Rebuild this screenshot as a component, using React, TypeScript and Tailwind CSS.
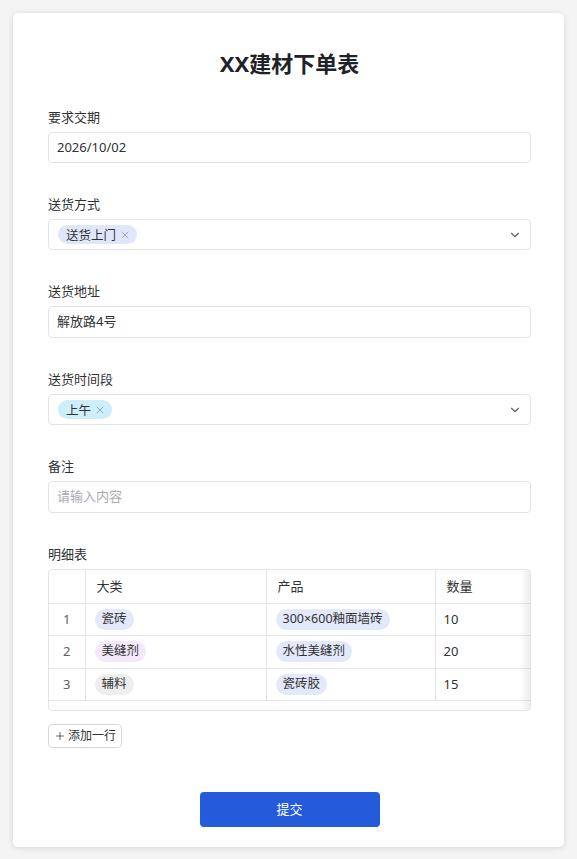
import { ChevronDown, X, Plus } from 'lucide-react';

const font = { fontFamily: '"Noto Sans", "Noto Sans CJK SC", sans-serif' };

const rows = [
    { no: 1, cat: '瓷砖', catCls: 'bg-[#e3e9fb]', prod: '300×600釉面墙砖', qty: '10' },
    { no: 2, cat: '美缝剂', catCls: 'bg-[#f3e9fb]', prod: '水性美缝剂', qty: '20' },
    { no: 3, cat: '辅料', catCls: 'bg-[#eeeeef]', prod: '瓷砖胶', qty: '15' },
];

function Label({ children }: { children: React.ReactNode }) {
    return <div className="text-[13px] leading-[20px] text-[#303133] mb-[5px]">{children}</div>;
}

function Tag({ text, cls }: { text: string; cls: string }) {
    return (
        <span className={`inline-flex items-center h-[19px] rounded-full pl-2 pr-1.5 gap-[3px] text-[12.5px] leading-[19px] text-[#303133] ${cls}`}>
            <span className="pt-[1px]">{text}</span>
            <X size={12} strokeWidth={1.5} className="text-[#8a8f99]" />
        </span>
    );
}

export default function App() {
    return (
        <div className="min-h-screen bg-[#f4f4f5] p-[13px]" style={font}>
            <div className="bg-white rounded-[5px] shadow-[0_1px_6px_rgba(0,0,0,0.12)] pl-[35px] pr-[33px] pt-[35px] pb-[20px]">
                <h1 className="text-center text-[22px] leading-[30px] font-bold text-[#1f2329] mb-[29px]">XX建材下单表</h1>

                {/* 要求交期 */}
                <div className="mb-[31px]">
                    <Label>要求交期</Label>
                    <div className="h-[31px] border border-[#e2e4e8] rounded-[4px] flex items-center px-2 text-[13px] text-[#303133]">
                        2026/10/02
                    </div>
                </div>

                {/* 送货方式 */}
                <div className="mb-[31px]">
                    <Label>送货方式</Label>
                    <div className="h-[31px] border border-[#e2e4e8] rounded-[4px] flex items-center pl-[9px] pr-2">
                        <Tag text="送货上门" cls="bg-[#e1e7fa]" />
                        <ChevronDown size={14} strokeWidth={2} className="ml-auto text-[#606266]" />
                    </div>
                </div>

                {/* 送货地址 */}
                <div className="mb-[31px]">
                    <Label>送货地址</Label>
                    <div className="h-[32px] border border-[#e2e4e8] rounded-[4px] flex items-center px-2 text-[13px] text-[#303133]">
                        解放路4号
                    </div>
                </div>

                {/* 送货时间段 */}
                <div className="mb-[31px]">
                    <Label>送货时间段</Label>
                    <div className="h-[31px] border border-[#e2e4e8] rounded-[4px] flex items-center pl-[9px] pr-2">
                        <Tag text="上午" cls="bg-[#cdeefb]" />
                        <ChevronDown size={14} strokeWidth={2} className="ml-auto text-[#606266]" />
                    </div>
                </div>

                {/* 备注 */}
                <div className="mb-[31px]">
                    <Label>备注</Label>
                    <div className="h-[32px] border border-[#e2e4e8] rounded-[4px] flex items-center px-2 text-[13px] text-[#a8abb2]">
                        请输入内容
                    </div>
                </div>

                {/* 明细表 */}
                <Label>明细表</Label>
                <div className="relative border border-[#e2e4e8] rounded-[4px] overflow-hidden">
                    <table className="border-collapse text-[13px] text-[#303133] w-[560px] table-fixed">
                        <colgroup>
                            <col className="w-[36px]" />
                            <col className="w-[181px]" />
                            <col className="w-[169px]" />
                            <col className="w-[174px]" />
                        </colgroup>
                        <thead>
                            <tr className="h-[33px]">
                                <th className="border-r border-b border-[#e2e4e8] font-normal"></th>
                                <th className="border-r border-b border-[#e2e4e8] font-normal text-left px-[11px]">大类</th>
                                <th className="border-r border-b border-[#e2e4e8] font-normal text-left px-[11px]">产品</th>
                                <th className="border-b border-[#e2e4e8] font-normal text-left px-[11px]">数量</th>
                            </tr>
                        </thead>
                        <tbody>
                            {rows.map((r) => (
                                <tr key={r.no} className="h-[32.5px]">
                                    <td className="border-r border-b border-[#e2e4e8] text-center text-[#606266]">{r.no}</td>
                                    <td className="border-r border-b border-[#e2e4e8] px-[9px]">
                                        <span className={`inline-flex items-center h-[21px] rounded-full px-[7px] text-[12.5px] ${r.catCls}`}>{r.cat}</span>
                                    </td>
                                    <td className="border-r border-b border-[#e2e4e8] px-[9px]">
                                        <span className="inline-flex items-center h-[21px] rounded-full px-[7px] text-[12.5px] bg-[#e3e9fb]">{r.prod}</span>
                                    </td>
                                    <td className="border-b border-[#e2e4e8] px-[8px]">{r.qty}</td>
                                </tr>
                            ))}
                        </tbody>
                    </table>
                    <div className="h-[9px]" />
                    <div className="pointer-events-none absolute top-0 right-0 bottom-0 w-[10px] bg-gradient-to-l from-[rgba(0,0,0,0.07)] to-transparent" />
                </div>

                <button className="mt-[13px] h-[24px] px-[5px] border border-[#d4d7de] rounded-[4px] flex items-center gap-[2px] text-[12px] text-[#303133]">
                    <Plus size={12} strokeWidth={1.5} />
                    添加一行
                </button>

                <div className="flex justify-center mt-[44px]">
                    <button className="w-[180px] h-[35px] rounded-[4px] bg-[#245bdb] text-white text-[13px]">提交</button>
                </div>
            </div>
        </div>
    );
}
